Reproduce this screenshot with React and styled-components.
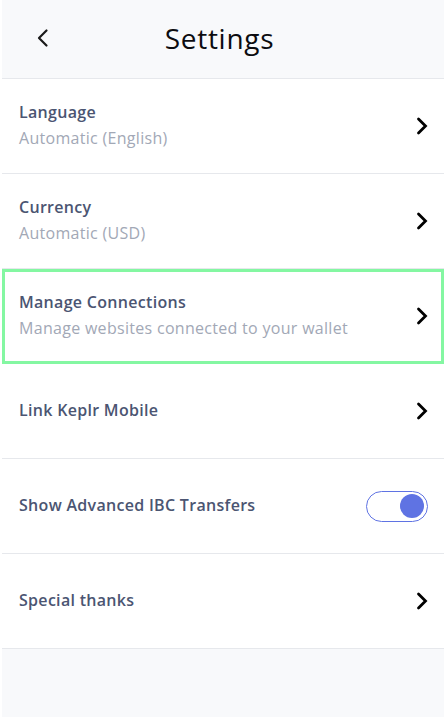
import React from "react";
import styled, { createGlobalStyle } from "styled-components";

const Global = createGlobalStyle`
  html, body { margin: 0; padding: 0; background: #ffffff; }
  body { font-family: "Open Sans", "Noto Sans", sans-serif; -webkit-font-smoothing: antialiased; }
  * { box-sizing: border-box; }
`;

const Page = styled.div`
  margin: 0 2px;
  min-height: 717px;
  background: #f8f9fb;
  display: flex;
  flex-direction: column;
`;

const Header = styled.header`
  height: 79px;
  display: grid;
  grid-template-columns: 60px 1fr 60px;
  align-items: center;
  border-bottom: 1px solid #e6e8ec;
  padding-bottom: 2px;
`;

const BackButton = styled.button`
  border: 0;
  background: none;
  padding: 0 0 0 34px;
  display: flex;
  align-items: center;
  cursor: pointer;
  color: #1a1a1a;
`;

const Title = styled.h1`
  margin: 0;
  text-align: center;
  font-size: 28px;
  font-weight: 400;
  letter-spacing: 0.7px;
  color: #0c0c10;
  padding-right: 7px;
`;

const List = styled.div`
  display: flex;
  flex-direction: column;
`;

const Row = styled.div`
  height: 95px;
  background: #ffffff;
  border-bottom: 1px solid #e6e8ec;
  display: flex;
  align-items: center;
  justify-content: space-between;
  padding: 0 15px 0 17px;
  outline: ${(p) => (p.$highlight ? "3px solid #84f7a2" : "none")};
  outline-offset: -3px;
`;

const Texts = styled.div`
  display: flex;
  flex-direction: column;
  gap: 2px;
  margin-top: -2px;
`;

const RowTitle = styled.div`
  font-size: 16px;
  font-weight: 600;
  letter-spacing: 0.3px;
  color: #4b5572;
  line-height: 24px;
`;

const RowSub = styled.div`
  font-size: 16px;
  font-weight: 400;
  letter-spacing: 0.3px;
  color: #a2a8b6;
  line-height: 24px;
`;

const Chevron = styled.svg`
  width: 14px;
  height: 18px;
  flex: none;
`;

const Toggle = styled.div`
  width: 62px;
  height: 31px;
  border: 1.5px solid #5f73e3;
  border-radius: 16px;
  display: flex;
  align-items: center;
  justify-content: flex-end;
  padding: 0 3px;
  margin-right: 1px;
`;

const Knob = styled.div`
  width: 24px;
  height: 24px;
  border-radius: 50%;
  background: #5f73e3;
`;

const ChevronIcon = () => (
  <Chevron viewBox="0 0 14 18">
    <path d="M3.5 2 L10.5 9 L3.5 16" fill="none" stroke="#000" strokeWidth="2.8" strokeLinecap="round" strokeLinejoin="miter" />
  </Chevron>
);

const items = [
  { title: "Language", sub: "Automatic (English)" },
  { title: "Currency", sub: "Automatic (USD)" },
  { title: "Manage Connections", sub: "Manage websites connected to your wallet", highlight: true },
  { title: "Link Keplr Mobile" },
  { title: "Show Advanced IBC Transfers", toggle: true },
  { title: "Special thanks" },
];

export default function App() {
  return (
    <>
      <Global />
      <Page>
        <Header>
          <BackButton aria-label="Back">
            <svg width="13" height="20" viewBox="0 0 13 20">
              <path d="M10.5 2.5 L3 10 L10.5 17.5" fill="none" stroke="#1a1a1a" strokeWidth="2.2" strokeLinecap="round" strokeLinejoin="round" />
            </svg>
          </BackButton>
          <Title>Settings</Title>
          <div />
        </Header>
        <List>
          {items.map((it) => (
            <Row key={it.title} $highlight={it.highlight}>
              <Texts>
                <RowTitle>{it.title}</RowTitle>
                {it.sub && <RowSub>{it.sub}</RowSub>}
              </Texts>
              {it.toggle ? (
                <Toggle>
                  <Knob />
                </Toggle>
              ) : (
                <ChevronIcon />
              )}
            </Row>
          ))}
        </List>
      </Page>
    </>
  );
}
